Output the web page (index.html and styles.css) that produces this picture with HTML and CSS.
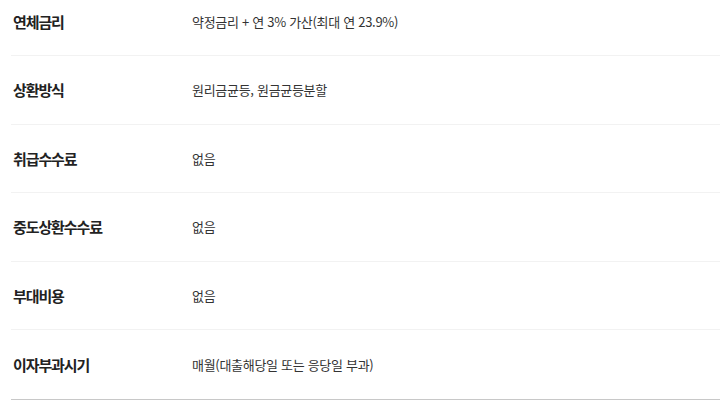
FILE: index.html
```html
<!DOCTYPE html>
<html lang="ko">
<head>
<meta charset="utf-8">
<link rel="stylesheet" href="styles.css">
</head>
<body>
<div class="list">
  <div class="row"><div class="label">연체금리</div><div class="value">약정금리 + 연 3% 가산(최대 연 23.9%)</div></div>
  <div class="row"><div class="label">상환방식</div><div class="value">원리금균등, 원금균등분할</div></div>
  <div class="row"><div class="label">취급수수료</div><div class="value">없음</div></div>
  <div class="row"><div class="label">중도상환수수료</div><div class="value">없음</div></div>
  <div class="row"><div class="label">부대비용</div><div class="value">없음</div></div>
  <div class="row last"><div class="label">이자부과시기</div><div class="value">매월(대출해당일 또는 응당일 부과)</div></div>
</div>
</body>
</html>
```
FILE: styles.css
```css
html, body {
  margin: 0;
  padding: 0;
  background: #fff;
  overflow: hidden;
}
.list {
  margin: -12.6px 0 0 11px;
  font-family: "Noto Sans CJK KR", "Noto Sans", sans-serif;
}
.row {
  display: flex;
  align-items: center;
  height: 67.6px;
  border-bottom: 1px solid #f2f2f2;
}
.row.last {
  height: 68.4px;
  border-bottom: 2px solid #c8c8c8;
}
.label {
  width: 179px;
  padding-left: 2px;
  flex: none;
  font-size: 15px;
  font-weight: 700;
  color: #222;
  letter-spacing: -1.1px;
}
.value {
  font-size: 13px;
  color: #333;
  letter-spacing: -0.3px;
}
```
